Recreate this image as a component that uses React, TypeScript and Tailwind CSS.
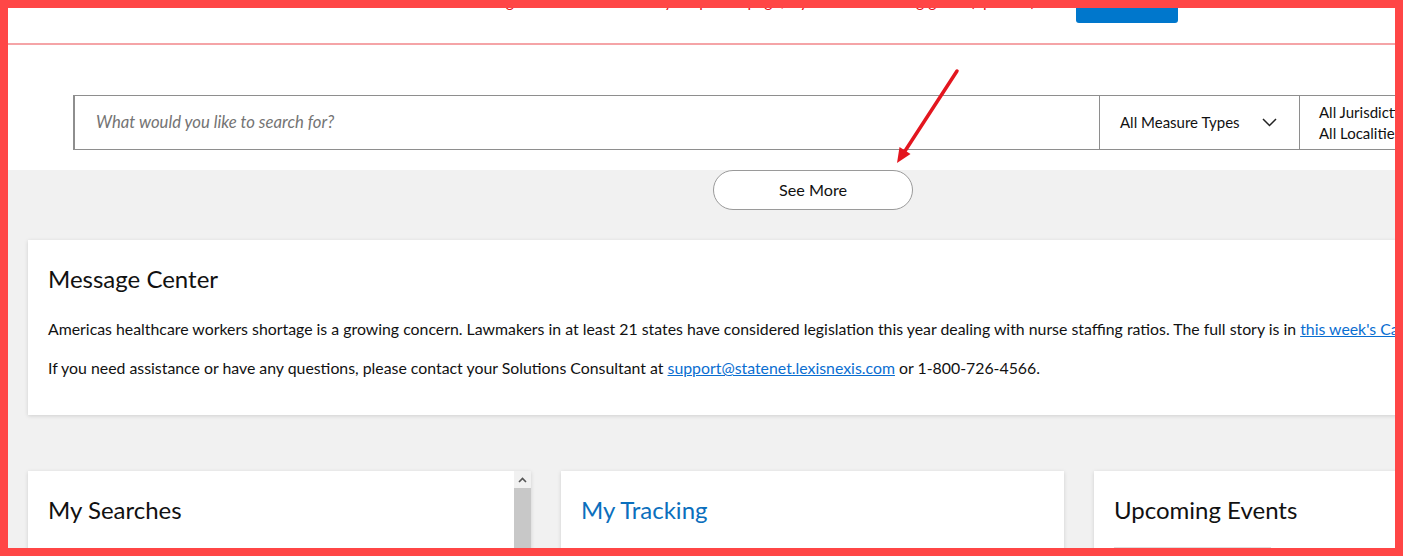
import React from "react";

const Card: React.FC<{ title: string; blue?: boolean; scroll?: boolean; strip?: boolean }> = ({ title, blue, scroll, strip }) => {
    return (
        <div className="w-[503px] h-[120px] bg-white shadow-[0_1px_4px_rgba(0,0,0,0.14)] flex">
            <div className="flex-1 pl-[20px] pt-[24px]">
                <div className={"text-[24px] leading-[30px] " + (blue ? "text-[#0b6fbd]" : "text-[#111]")}>{title}</div>
                {strip && <div className="mt-[22px] w-[157px] h-[6px] bg-[#f3f3f3] border-t border-[#dedede]" />}
            </div>
            {scroll && (
                <div className="w-[17px] flex flex-col">
                    <div className="h-[17px] bg-[#f1f1f1] flex items-center justify-center">
                        <svg width="9" height="6" viewBox="0 0 9 6">
                            <path d="M1 5 L4.5 1.5 L8 5" fill="none" stroke="#555" strokeWidth="1.6" />
                        </svg>
                    </div>
                    <div className="flex-1 bg-[#c8c8c8]" />
                </div>
            )}
        </div>
    );
};

export default function App() {
    return (
        <div className="relative w-[1403px] h-[556px] overflow-hidden border-8 border-[#ff4646] bg-white font-[Lato,sans-serif] text-[#111]">
            <div className="w-[1610px]">
                {/* top banner, scrolled mostly out of view */}
                <div className="h-[37px] border-b-2 border-[#f5a4a7] flex items-start">
                    <div className="-mt-[25px] flex items-center h-[40px]">
                        <div className="w-[1068px] pr-[41px] mb-[5px] text-right text-[15.8px] leading-[20px] text-[#e3101b] whitespace-nowrap">
                            Learning resources are now in your profile page, try the new training guide (optional)
                        </div>
                        <div className="w-[102px] h-[40px] bg-[#0077cc] rounded-b-[3px]" />
                    </div>
                </div>

                {/* search */}
                <div className="pt-[50px] pb-[40px] bg-white">
                    <div className="ml-[65px] w-[1480px] h-[55px] border border-l-2 border-[#8e8e8e] flex text-[15px]">
                        <div className="w-[1024px] flex items-center pl-[21px] italic text-[16.7px] text-[#747474]">
                            What would you like to search for?
                        </div>
                        <div className="w-[200px] border-l border-[#8e8e8e] flex items-center pl-[20px] pr-[22px] justify-between">
                            <span>All Measure Types</span>
                            <svg width="15" height="9" viewBox="0 0 15 9">
                                <path d="M1 1 L7.5 7.5 L14 1" fill="none" stroke="#222" strokeWidth="1.5" />
                            </svg>
                        </div>
                        <div className="w-[200px] border-l border-[#8e8e8e] flex flex-col justify-center pl-[19px] leading-[21px]">
                            <span>All Jurisdictions</span>
                            <span>All Localities</span>
                        </div>
                        <div className="flex-1 border-l border-[#8e8e8e]" />
                    </div>
                </div>

                {/* dashboard */}
                <div className="bg-[#f1f1f1] px-[20px] pb-[40px]">
                    <button className="block mx-auto -mt-[20px] w-[200px] h-[40px] rounded-full border border-[#9a9a9a] bg-white text-[16.2px] text-[#111]">
                        See More
                    </button>

                    <div className="mt-[30px] h-[175px] bg-white shadow-[0_1px_4px_rgba(0,0,0,0.14)] pl-[20px] pt-[24px] text-[15.85px] leading-[24px] whitespace-nowrap">
                        <div className="text-[24px] leading-[30px]">Message Center</div>
                        <p className="mt-[23px]">
                            Americas healthcare workers shortage is a growing concern. Lawmakers in at least 21 states have considered legislation this year dealing with nurse staffing ratios. The full story is in{" "}
                            <a className="text-[#0a6ed1] underline">this week's Capitol Journal</a>.
                        </p>
                        <p className="mt-[15px]">
                            If you need assistance or have any questions, please contact your Solutions Consultant at{" "}
                            <a className="text-[#0a6ed1] underline">support@statenet.lexisnexis.com</a> or 1-800-726-4566.
                        </p>
                    </div>

                    <div className="mt-[56px] flex gap-[30px]">
                        <Card title="My Searches" scroll />
                        <Card title="My Tracking" blue />
                        <Card title="Upcoming Events" strip />
                    </div>
                </div>
            </div>

            {/* annotation arrow */}
            <svg className="absolute left-0 top-0 pointer-events-none" width="1387" height="540">
                <line x1="949" y1="63" x2="897" y2="143" stroke="#e3161f" strokeWidth="3.5" strokeLinecap="round" />
                <polygon points="889,155 902.5,146 891.5,139" fill="#e3161f" />
            </svg>
        </div>
    );
}
